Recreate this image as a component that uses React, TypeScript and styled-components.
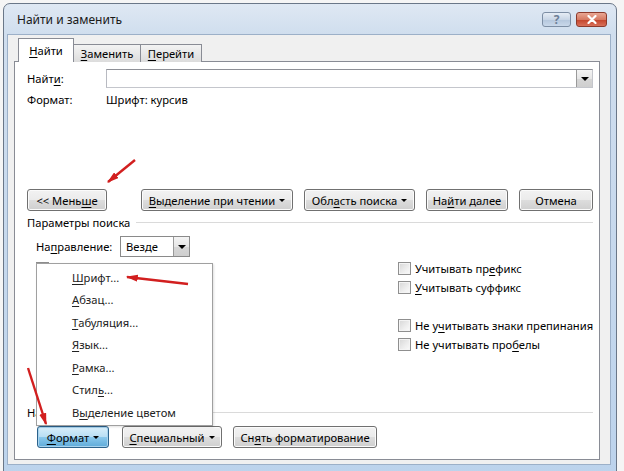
import React from "react";
import styled, { createGlobalStyle, css } from "styled-components";

const GlobalStyle = createGlobalStyle`
  html, body {
    margin: 0;
    padding: 0;
  }
  body {
    font-family: "Noto Sans", "Segoe UI", sans-serif;
    font-size: 11.2px;
    color: #000;
    background: #f4f4f4;
  }
`;

interface TabProps {
  $active?: boolean;
  $w: number;
}

interface BtnProps {
  $w: number;
  $pressed?: boolean;
  $ml?: number;
}

const App = () => {
  return (
    <Root>
      <GlobalStyle />
      <Frame>
        <TitleBar>
          <TitleText>Найти и заменить</TitleText>
          <CaptionGroup>
            <CaptionBtn>?</CaptionBtn>
            <CaptionBtn $close>
              <svg width="10" height="9" viewBox="0 0 10 9">
                <path d="M1.5 1 L8.5 8 M8.5 1 L1.5 8" stroke="#fff" strokeWidth="2.2" strokeLinecap="round" />
              </svg>
            </CaptionBtn>
          </CaptionGroup>
        </TitleBar>

        <Client>
          <TabRow>
            <Tab $active $w={56}><span><Acc>Н</Acc>айти</span></Tab>
            <Tab $w={68}><span><Acc>З</Acc>аменить</span></Tab>
            <Tab $w={62}><span><Acc>П</Acc>ерейти</span></Tab>
          </TabRow>

          <Panel>
            <FieldRow>
              <FieldLabel>Найт<Acc>и</Acc>:</FieldLabel>
              <Combo>
                <DropBtn><Caret /></DropBtn>
              </Combo>
            </FieldRow>
            <FormatRow>
              <FieldLabel>Формат:</FieldLabel>
              <span>Шрифт: курсив</span>
            </FormatRow>

            <ButtonRow>
              <Btn $w={80}><span>&lt;&lt; Мень<Acc>ш</Acc>е</span></Btn>
              <RightGroup>
                <Btn $w={152}><span><Acc>В</Acc>ыделение при чтении</span><Caret /></Btn>
                <Btn $w={111}><span>Обл<Acc>а</Acc>сть поиска</span><Caret /></Btn>
                <Btn $w={82}><span>На<Acc>й</Acc>ти далее</span></Btn>
                <Btn $w={74}><span>Отмена</span></Btn>
              </RightGroup>
            </ButtonRow>

            <SectionHeader $mt={3}>
              <span>Параметры поиска</span>
              <Rule />
            </SectionHeader>

            <DirectionRow>
              <DirLabel>На<Acc>п</Acc>равление:</DirLabel>
              <Select>
                <span>Везде</span>
                <DropBtn><Caret /></DropBtn>
              </Select>
            </DirectionRow>

            {/* левая колонка флажков закрыта меню, видна только верхняя кромка первого */}
            <OptionsGrid>
              <CheckRow><Box /></CheckRow>
              <CheckRow><Box /><span>Учитывать пр<Acc>е</Acc>фикс</span></CheckRow>
              <span />
              <CheckRow><Box /><span><Acc>У</Acc>читывать суффикс</span></CheckRow>
              <span />
              <span />
              <span />
              <CheckRow><Box /><span>Не у<Acc>ч</Acc>итывать знаки препинания</span></CheckRow>
              <span />
              <CheckRow><Box /><span>Не учитывать про<Acc>б</Acc>елы</span></CheckRow>
            </OptionsGrid>

            <SectionHeader $mt={50}>
              <span>Найти</span>
              <Rule />
            </SectionHeader>

            <BottomRow>
              <Btn $w={72} $pressed><span><Acc>Ф</Acc>ормат</span><Caret /></Btn>
              <Btn $w={100} $ml={13}><span><Acc>С</Acc>пециальный</span><Caret /></Btn>
              <Btn $w={144} $ml={11}><span>Сн<Acc>я</Acc>ть форматирование</span></Btn>
            </BottomRow>

            <Menu>
              <MenuItem><Acc>Ш</Acc>рифт...</MenuItem>
              <MenuItem><Acc>А</Acc>бзац...</MenuItem>
              <MenuItem><Acc>Т</Acc>абуляция...</MenuItem>
              <MenuItem><Acc>Я</Acc>зык...</MenuItem>
              <MenuItem><Acc>Р</Acc>амка...</MenuItem>
              <MenuItem>Стил<Acc>ь</Acc>...</MenuItem>
              <MenuItem>В<Acc>ы</Acc>деление цветом</MenuItem>
            </Menu>
          </Panel>
        </Client>
      </Frame>

      {/* красные стрелки поверх скриншота */}
      <Arrows width="624" height="471" viewBox="0 0 624 471">
        <defs>
          <marker id="head" viewBox="0 0 10 6" refX="9" refY="3" markerWidth="5" markerHeight="3.2" orient="auto" markerUnits="strokeWidth">
            <path d="M0 0 L10 3 L0 6 Z" fill="#d21f1f" />
          </marker>
        </defs>
        <path d="M135 160 L108 182" stroke="#d21f1f" strokeWidth="2.4" markerEnd="url(#head)" />
        <path d="M188 284 L127 277" stroke="#d21f1f" strokeWidth="2.4" markerEnd="url(#head)" />
        <path d="M28 368 L46 424" stroke="#d21f1f" strokeWidth="2.4" markerEnd="url(#head)" />
      </Arrows>
    </Root>
  );
};

export default App;

const Root = styled.div`
  width: 624px;
  height: 471px;
  position: relative;
  overflow: hidden;
  background: #f5f5f5;
`;

const Frame = styled.div`
  margin: 3px 0 0 3px;
  width: 614px;
  height: 480px;
  box-sizing: border-box;
  border: 1px solid #6a7788;
  border-radius: 7px 7px 0 0;
  background: linear-gradient(180deg, #dfe8f3 0%, #d0deee 30px, #bcd3ec 100%);
  padding: 0 6px 0 4px;
`;

const TitleBar = styled.div`
  height: 31px;
  display: flex;
  align-items: center;
  padding: 0 3px 0 9px;
`;

const TitleText = styled.div`
  flex: 1;
  font-size: 12px;
  color: #1a1a1a;
`;

const CaptionGroup = styled.div`
  display: flex;
  gap: 5px;
`;

const CaptionBtn = styled.div<{ $close?: boolean }>`
  width: 29px;
  height: 15px;
  box-sizing: border-box;
  border: 1px solid #7d8ea4;
  border-radius: 3px;
  display: flex;
  align-items: center;
  justify-content: center;
  font-size: 12px;
  font-weight: bold;
  color: #6d7f96;
  background: linear-gradient(180deg, #e6edf5 0%, #c9d6e6 50%, #b4c6dc 51%, #c9d8ea 100%);
  ${(p) =>
    p.$close &&
    css`
      width: 31px;
      border-color: #8c3a2c;
      background: linear-gradient(180deg, #e9a794 0%, #d67a63 50%, #c3432a 51%, #d8705a 100%);
    `}
`;

const Client = styled.div`
  height: 429px;
  box-sizing: border-box;
  background: #f0f0f0;
  box-shadow: 0 0 0 1px #9cb0c8;
  padding: 3px 10px 4px 6px;
  display: flex;
  flex-direction: column;
`;

const TabRow = styled.div`
  display: flex;
  align-items: flex-end;
  height: 24px;
  margin-left: 4px;
  margin-bottom: -1px;
  position: relative;
  z-index: 1;
`;

const Tab = styled.div<TabProps>`
  width: ${(p) => p.$w}px;
  box-sizing: border-box;
  border: 1px solid #898c95;
  border-bottom: none;
  display: flex;
  align-items: center;
  justify-content: center;
  margin-left: -1px;
  height: 18px;
  background: linear-gradient(180deg, #f3f3f3 0%, #e8e8e8 50%, #dcdcdc 100%);
  &:first-child {
    margin-left: 0;
  }
  ${(p) =>
    p.$active &&
    css`
      height: 24px;
      background: #fff;
      padding-bottom: 1px;
      position: relative;
      z-index: 2;
    `}
`;

const Acc = styled.span`
  text-decoration: underline;
  text-underline-offset: 2px;
  text-decoration-thickness: 1px;
`;

const Panel = styled.div`
  flex: 1;
  position: relative;
  background: #fff;
  border: 1px solid #898c95;
  padding: 0 6px 0 12px;
  display: flex;
  flex-direction: column;
`;

const FieldRow = styled.div`
  margin-top: 7px;
  height: 19px;
  display: flex;
  align-items: center;
`;

const FieldLabel = styled.div`
  width: 79px;
  flex-shrink: 0;
`;

const Combo = styled.div`
  flex: 1;
  height: 19px;
  box-sizing: border-box;
  border: 1px solid #abadb3;
  border-color: #8e9097 #c4c6cc #c4c6cc #b8bac1;
  background: #fff;
  display: flex;
  justify-content: flex-end;
`;

const DropBtn = styled.div`
  width: 16px;
  height: 100%;
  box-sizing: border-box;
  border-left: 1px solid #9a9a9a;
  background: linear-gradient(180deg, #f4f4f4 0%, #e6e6e6 50%, #d6d6d6 51%, #cfcfcf 100%);
  display: flex;
  align-items: center;
  justify-content: center;
`;

const Caret = styled.span`
  display: inline-block;
  width: 0;
  height: 0;
  border-left: 3px solid transparent;
  border-right: 3px solid transparent;
  border-top: 3px solid #000;
  margin-left: 4px;
  ${DropBtn} & {
    margin-left: 0;
    border-left-width: 4px;
    border-right-width: 4px;
    border-top-width: 4px;
  }
`;

const FormatRow = styled.div`
  margin-top: 3px;
  height: 16px;
  display: flex;
  align-items: center;
`;

const ButtonRow = styled.div`
  margin-top: 82px;
  display: flex;
  height: 22px;
`;

const RightGroup = styled.div`
  margin-left: auto;
  display: flex;
  gap: 11px;
`;

const Btn = styled.div<BtnProps>`
  width: ${(p) => p.$w}px;
  height: 22px;
  margin-left: ${(p) => p.$ml ?? 0}px;
  box-sizing: border-box;
  border: 1px solid #707070;
  border-radius: 3px;
  background: linear-gradient(180deg, #f2f2f2 0%, #ebebeb 50%, #dddddd 51%, #cfcfcf 100%);
  box-shadow: inset 0 0 0 1px #fbfbfb;
  display: flex;
  align-items: center;
  justify-content: center;
  white-space: nowrap;
  ${(p) =>
    p.$pressed &&
    css`
      border-color: #2c628b;
      background: linear-gradient(180deg, #d9eefa 0%, #b8def4 50%, #8ac8ec 51%, #5fabd9 100%);
      box-shadow: inset 0 0 0 1px #a7d3ee;
    `}
`;

const SectionHeader = styled.div<{ $mt: number }>`
  margin-top: ${(p) => p.$mt}px;
  height: 16px;
  display: flex;
  align-items: center;
`;

const Rule = styled.div`
  flex: 1;
  height: 1px;
  background: #dadada;
  margin-left: 6px;
`;

const DirectionRow = styled.div`
  margin-top: 6px;
  padding-left: 9px;
  height: 21px;
  display: flex;
  align-items: center;
`;

const DirLabel = styled.div`
  width: 84px;
`;

const Select = styled.div`
  width: 70px;
  height: 21px;
  box-sizing: border-box;
  border: 1px solid #8a8a8a;
  background: #fff;
  display: flex;
  align-items: center;
  padding-left: 5px;
  & > span {
    flex: 1;
  }
`;

const OptionsGrid = styled.div`
  margin-top: 2px;
  padding-left: 9px;
  display: grid;
  grid-template-columns: 362px 1fr;
  grid-auto-rows: 19px;
`;

const CheckRow = styled.div`
  display: flex;
  align-items: center;
  gap: 4px;
  white-space: nowrap;
`;

const Box = styled.span`
  width: 13px;
  height: 13px;
  box-sizing: border-box;
  border: 1px solid #8f8f8f;
  background: linear-gradient(135deg, #d6d6d6 0%, #eeeeee 60%, #fbfbfb 100%);
  box-shadow: inset 0 0 0 1px #f4f4f4;
`;

const BottomRow = styled.div`
  margin-top: 6px;
  padding-left: 10px;
  display: flex;
  height: 22px;
`;

const Menu = styled.div`
  position: absolute;
  left: 21px;
  top: 201px;
  width: 177px;
  box-sizing: border-box;
  border: 1px solid #a0a0a0;
  background: #fff;
  padding: 2px 0 1px 0;
  box-shadow: 1px 1px 2px rgba(0, 0, 0, 0.12);
  z-index: 3;
`;

const MenuItem = styled.div`
  height: 22.5px;
  display: flex;
  align-items: center;
  padding-left: 35px;
  color: #222;
  white-space: pre;
`;

const Arrows = styled.svg`
  position: absolute;
  left: 0;
  top: 0;
  pointer-events: none;
  z-index: 5;
`;
